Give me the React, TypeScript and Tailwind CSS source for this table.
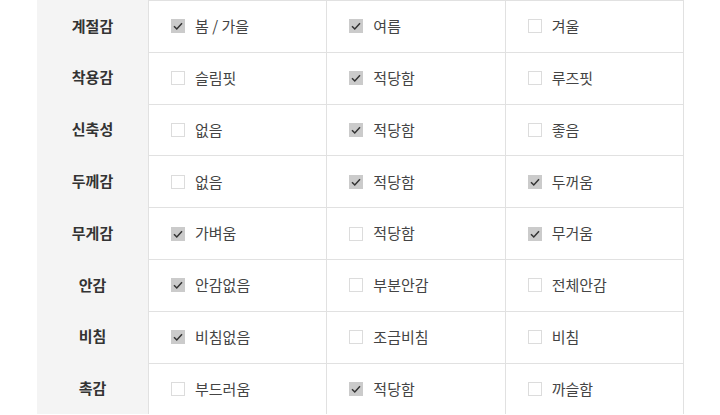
import React from 'react';

type Opt = { label: string; checked: boolean };
type Row = { title: string; options: Opt[] };

const rows: Row[] = [
  { title: '계절감', options: [{ label: '봄 / 가을', checked: true }, { label: '여름', checked: true }, { label: '겨울', checked: false }] },
  { title: '착용감', options: [{ label: '슬림핏', checked: false }, { label: '적당함', checked: true }, { label: '루즈핏', checked: false }] },
  { title: '신축성', options: [{ label: '없음', checked: false }, { label: '적당함', checked: true }, { label: '좋음', checked: false }] },
  { title: '두께감', options: [{ label: '없음', checked: false }, { label: '적당함', checked: true }, { label: '두꺼움', checked: true }] },
  { title: '무게감', options: [{ label: '가벼움', checked: true }, { label: '적당함', checked: false }, { label: '무거움', checked: true }] },
  { title: '안감', options: [{ label: '안감없음', checked: true }, { label: '부분안감', checked: false }, { label: '전체안감', checked: false }] },
  { title: '비침', options: [{ label: '비침없음', checked: true }, { label: '조금비침', checked: false }, { label: '비침', checked: false }] },
  { title: '촉감', options: [{ label: '부드러움', checked: false }, { label: '적당함', checked: true }, { label: '까슬함', checked: false }] },
];

const Box = ({ checked }: { checked: boolean }) =>
  checked ? (
    <span className="flex h-[14px] w-[14px] shrink-0 items-center justify-center bg-[#cbcbcb]">
      <svg viewBox="0 0 14 14" className="h-[14px] w-[14px]">
        <path d="M3 7.2 L5.8 10 L11 4.3" fill="none" stroke="#333" strokeWidth="1.5" />
      </svg>
    </span>
  ) : (
    <span className="h-[14px] w-[14px] shrink-0 border border-[#dcdcdc] bg-white" />
  );

const App: React.FC = () => {
  return (
    <div
      className="h-[415px] w-[720px] overflow-hidden bg-white pl-[37px]"
      style={{ fontFamily: '"Noto Sans CJK KR", "Noto Sans", sans-serif' }}
    >
      <div className="w-[647px]">
        {rows.map((row) => (
          <div key={row.title} className="flex h-[51.8px]">
            <div className="flex w-[111px] items-center justify-center bg-[#f4f4f4] text-[15px] font-bold text-[#333]">
              {row.title}
            </div>
            <div className="flex flex-1 border-t border-l border-[#e1e1e1]">
              {row.options.map((o, i) => (
                <div
                  key={i}
                  className="flex flex-1 items-center gap-[10px] border-r border-[#e1e1e1] pl-[22px] text-[15px] text-[#444]"
                >
                  <Box checked={o.checked} />
                  <span>{o.label}</span>
                </div>
              ))}
            </div>
          </div>
        ))}
      </div>
    </div>
  );
};

export default App;
